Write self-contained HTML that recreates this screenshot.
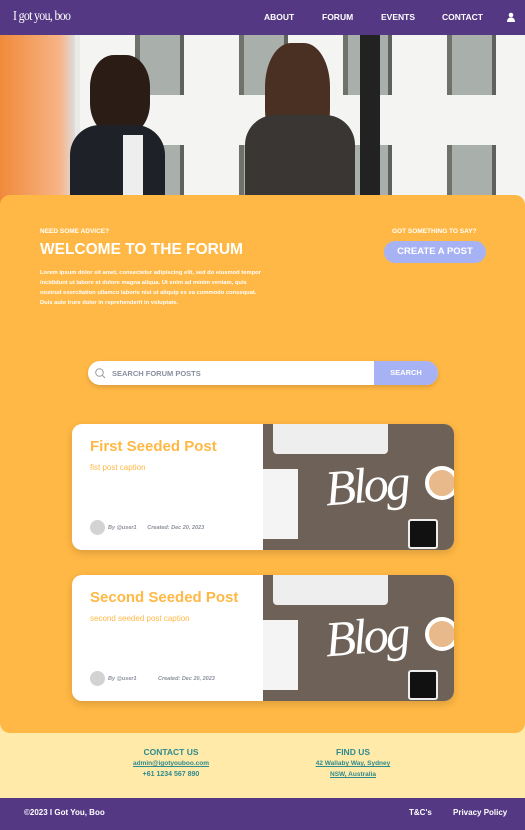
<!DOCTYPE html>
<html><head><meta charset="utf-8"><style>
*{margin:0;padding:0;box-sizing:border-box}
body{width:525px;height:830px;overflow:hidden;font-family:"Liberation Sans",sans-serif;background:#ffeaa9;position:relative}
.nav{position:absolute;top:0;left:0;width:525px;height:35px;background:#543884;color:#fff}
.logo{position:absolute;left:13px;top:9px;font-family:"Liberation Serif",serif;font-size:14px;letter-spacing:-0.8px;transform:scaleX(.85);transform-origin:left}
.nav a{position:absolute;top:12px;font-size:8.5px;font-weight:bold;color:#fff}
.hero{position:absolute;top:35px;left:0;width:525px;height:175px;background:#e9e9e6;overflow:hidden}
.main{position:absolute;top:195px;left:0;width:525px;height:538px;background:#ffb845;border-radius:10px}
.w{color:#fff;position:absolute;font-weight:bold}
.card{position:absolute;left:72px;width:382px;height:126px;background:#fff;border-radius:10px;overflow:hidden;box-shadow:0 3px 8px rgba(0,0,0,.15)}
.card h2{position:absolute;left:18px;top:14px;color:#ffb845;font-size:15px}
.card .cap{position:absolute;left:18px;top:39px;color:#ffb845;font-size:8px}
.meta{position:absolute;left:18px;top:96px;font-size:5.5px;font-style:italic;font-weight:bold;color:#8a8f9a}
.av{display:inline-block;width:15px;height:15px;border-radius:50%;background:#d3d3d3;vertical-align:middle;margin-right:3px}
.img{position:absolute;left:191px;top:0;width:191px;height:126px;background:#6e6258}
.foot{position:absolute;top:798px;left:0;width:525px;height:32px;background:#543884;color:#fff;font-size:8px;font-weight:bold}
.fc{position:absolute;color:#2f8a8f;font-size:7px;text-align:center;font-weight:bold}
.blog{position:absolute;left:62px;top:32px;font-family:'Liberation Serif',serif;font-style:italic;font-size:50px;color:#fff;letter-spacing:-3px;transform:rotate(-5deg)}
</style></head><body>
<div class="nav"><div class="logo">I got you, boo</div>
<a style="left:264px">ABOUT</a><a style="left:322px">FORUM</a><a style="left:381px">EVENTS</a><a style="left:442px">CONTACT</a>
<svg style="position:absolute;left:506px;top:12px" width="10" height="10" viewBox="0 0 10 10"><circle cx="5" cy="3" r="2.3" fill="#fff"/><path d="M1 10 Q1 5.5 5 5.5 Q9 5.5 9 10Z" fill="#fff"/></svg></div>
<div class="hero">
<div style="position:absolute;left:80px;top:0;width:445px;height:175px;background:repeating-linear-gradient(90deg,#f4f4f2 0 55px,#6f726b 55px 60px,#a9b0ac 60px 100px,#5f625c 100px 104px)"></div>
<div style="position:absolute;left:80px;top:0;width:445px;height:175px;background:repeating-linear-gradient(180deg,transparent 0 60px,#f4f4f2 60px 110px)"></div>
<div style="position:absolute;left:0;top:0;width:75px;height:175px;background:linear-gradient(90deg,#f08a3a,#f7b487 80%,#ddd)"></div>
<div style="position:absolute;left:360px;top:0;width:20px;height:175px;background:#222"></div>
<div style="position:absolute;left:90px;top:20px;width:60px;height:80px;border-radius:40%;background:#2b1c16"></div>
<div style="position:absolute;left:70px;top:90px;width:95px;height:90px;border-radius:30px 30px 0 0;background:#1e2228"></div>
<div style="position:absolute;left:123px;top:100px;width:20px;height:80px;background:#eee"></div>
<div style="position:absolute;left:265px;top:8px;width:65px;height:110px;border-radius:40%;background:#4a3022"></div>
<div style="position:absolute;left:245px;top:80px;width:110px;height:100px;border-radius:30px 30px 0 0;background:#3a3634"></div>
</div>
<div class="main">
<div class="w" style="left:40px;top:33px;font-size:6.5px">NEED SOME ADVICE?</div>
<div class="w" style="left:40px;top:46px;font-size:15.5px">WELCOME TO THE FORUM</div>
<div class="w" style="left:40px;top:73px;font-size:5.8px;line-height:10px;width:226px">Lorem ipsum dolor sit amet, consectetur adipiscing elit, sed do eiusmod tempor incididunt ut labore et dolore magna aliqua. Ut enim ad minim veniam, quis nostrud exercitation ullamco laboris nisi ut aliquip ex ea commodo consequat. Duis aute irure dolor in reprehenderit in voluptate.</div>
<div class="w" style="left:392px;top:33px;font-size:6.5px">GOT SOMETHING TO SAY?</div>
<div class="w" style="left:384px;top:46px;width:102px;height:22px;border-radius:11px;background:#a7b2f5;font-size:9.5px;text-align:center;line-height:22px">CREATE A POST</div>
<div style="position:absolute;left:88px;top:166px;width:350px;height:24px;border-radius:12px;background:#fff;overflow:hidden;box-shadow:0 2px 5px rgba(0,0,0,.15)">
<svg style="position:absolute;left:7px;top:7px" width="11" height="11" viewBox="0 0 11 11"><circle cx="4.5" cy="4.5" r="3.8" fill="none" stroke="#999" stroke-width="1"/><path d="M7.3 7.3L10 10" stroke="#999"/></svg>
<div style="position:absolute;left:24px;top:8px;font-size:7.5px;font-weight:bold;color:#8a8f9e">SEARCH FORUM POSTS</div>
<div style="position:absolute;left:286px;top:0;width:64px;height:24px;background:#a7b2f5;color:#fff;font-size:7.5px;font-weight:bold;text-align:center;line-height:24px">SEARCH</div></div>
</div>
<div class="card" style="top:424px"><h2>First Seeded Post</h2><div class="cap">fist post caption</div>
<div class="meta"><span class="av"></span>By @user1 &nbsp;&nbsp;&nbsp;&nbsp;&nbsp;&nbsp;Created: Dec 20, 2023</div>
<div class="img"><div style="position:absolute;left:10px;top:0;width:115px;height:30px;background:#eee;border-radius:0 0 4px 4px"></div><div style="position:absolute;left:0;top:45px;width:35px;height:70px;background:#f4f4f4"></div><div style="position:absolute;left:162px;top:42px;width:34px;height:34px;border-radius:50%;background:#e8b98a;border:4px solid #fff"></div><div style="position:absolute;left:145px;top:95px;width:30px;height:30px;background:#111;border:2px solid #eee;border-radius:3px"></div><div class="blog">Blog</div></div></div>
<div class="card" style="top:575px"><h2>Second Seeded Post</h2><div class="cap">second seeded post caption</div>
<div class="meta"><span class="av"></span>By @user1 &nbsp;&nbsp;&nbsp;&nbsp;&nbsp;&nbsp;&nbsp;&nbsp;&nbsp;&nbsp;&nbsp;&nbsp;&nbsp;Created: Dec 20, 2023</div>
<div class="img"><div style="position:absolute;left:10px;top:0;width:115px;height:30px;background:#eee;border-radius:0 0 4px 4px"></div><div style="position:absolute;left:0;top:45px;width:35px;height:70px;background:#f4f4f4"></div><div style="position:absolute;left:162px;top:42px;width:34px;height:34px;border-radius:50%;background:#e8b98a;border:4px solid #fff"></div><div style="position:absolute;left:145px;top:95px;width:30px;height:30px;background:#111;border:2px solid #eee;border-radius:3px"></div><div class="blog">Blog</div></div></div>
<div class="fc" style="left:120px;top:747px;width:102px"><div style="font-size:8.5px">CONTACT US</div><div style="text-decoration:underline;margin-top:3px;font-size:6.5px">admin@igotyouboo.com</div><div style="margin-top:4px">+61 1234 567 890</div></div>
<div class="fc" style="left:303px;top:747px;width:100px"><div style="font-size:8.5px">FIND US</div><div style="text-decoration:underline;margin-top:3px;font-size:6.5px">42 Wallaby Way, Sydney</div><div style="text-decoration:underline;margin-top:4px;font-size:6.5px">NSW, Australia</div></div>
<div class="foot"><span style="position:absolute;left:24px;top:10px">©2023 I Got You, Boo</span><span style="position:absolute;left:409px;top:10px">T&amp;C's</span><span style="position:absolute;left:453px;top:10px">Privacy Policy</span></div>
</body></html>
